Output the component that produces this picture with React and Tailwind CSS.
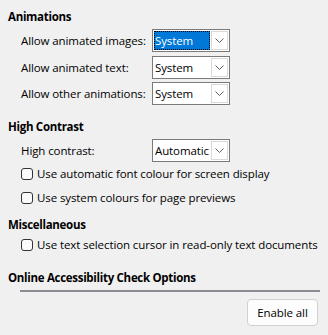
function Heading({ children, className = '' }) {
  return (
    <div className={`h-[16px] whitespace-nowrap pl-[8px] text-[11.5px] font-bold leading-[16px] tracking-[-0.3px] text-black ${className}`}>
      {children}
    </div>
  )
}

function Chevron() {
  return (
    <svg width="9" height="5" viewBox="0 0 9 5" fill="none">
      <path d="M0.5 0.5 L4.5 4.5 L8.5 0.5" stroke="#606060" strokeWidth="1" />
    </svg>
  )
}

function Combo({ value, focused = false }) {
  return (
    <div className="flex h-[23px] w-[78px] border border-[#7a7a7a] bg-white">
      <div className="flex flex-1 p-px">
        <div
          className={`flex flex-1 items-center pl-px text-[11.5px] leading-none tracking-[-0.1px] ${
            focused ? 'bg-[#0078d7] text-white outline-1 outline-dotted outline-black -outline-offset-1' : 'text-black'
          }`}
        >
          {value}
        </div>
      </div>
      <div className="my-px mr-px flex w-[17px] items-center justify-center border border-[#d9d9d9] bg-white">
        <Chevron />
      </div>
    </div>
  )
}

function ComboRow({ label, value, focused, className = '' }) {
  return (
    <div className={`flex h-[23px] items-center ${className}`}>
      <span className="w-[131px] whitespace-nowrap text-[11.5px] tracking-[-0.1px] text-black">{label}</span>
      <Combo value={value} focused={focused} />
    </div>
  )
}

function Check({ label }) {
  return (
    <div className="flex h-[24px] items-center">
      <span className="h-[12px] w-[12px] shrink-0 rounded-[3px] border border-[#333] bg-[#fbfbfb]" />
      <span className="ml-[4px] whitespace-nowrap text-[11.5px] tracking-[-0.1px] text-black">{label}</span>
    </div>
  )
}

export default function App() {
  return (
    <div
      className="h-[335px] w-[328px] overflow-hidden bg-[#f0f0f0] pt-[9px]"
      style={{ fontFamily: '"Open Sans", "Noto Sans", sans-serif' }}
    >
      <Heading>Animations</Heading>
      <div className="pl-[21px]">
        <ComboRow className="mt-[4px]" label="Allow animated images:" value="System" focused />
        <ComboRow className="mt-[4px]" label="Allow animated text:" value="System" />
        <ComboRow className="mt-[3px]" label="Allow other animations:" value="System" />
      </div>

      <Heading className="mt-[14px]">High Contrast</Heading>
      <div className="pl-[21px]">
        <ComboRow className="mt-[4px]" label="High contrast:" value="Automatic" />
        <Check label="Use automatic font colour for screen display" />
        <Check label="Use system colours for page previews" />
      </div>

      <Heading className="mt-[7px]">Miscellaneous</Heading>
      <div className="pl-[21px]">
        <Check label="Use text selection cursor in read-only text documents" />
      </div>

      <Heading className="mt-[13px]">Online Accessibility Check Options</Heading>
      <div className="ml-[20px] mr-[8px] mt-[4px] h-[2px] bg-[#8a8d93]" />
      <div className="mt-[7px] flex justify-end pr-[10px]">
        <button className="h-[27px] w-[71px] rounded-[4px] border border-[#d0d0d0] bg-[#fdfdfd] text-[11.5px] tracking-[-0.1px] text-black">
          Enable all
        </button>
      </div>
    </div>
  )
}
